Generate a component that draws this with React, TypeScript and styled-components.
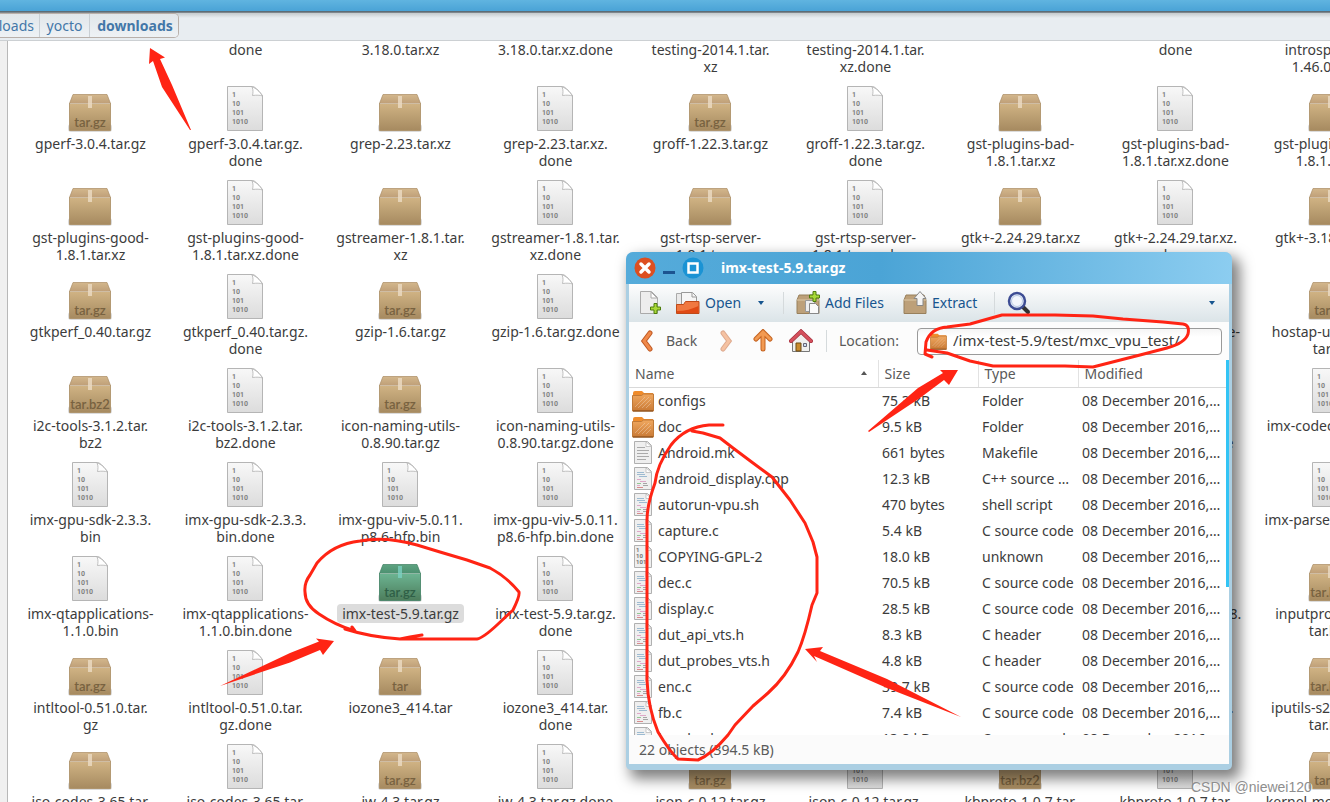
import React from "react";
import styled, { createGlobalStyle, css } from "styled-components";

const GlobalStyle = createGlobalStyle`
  * { box-sizing: border-box; }
  body {
    margin: 0;
    background: #fff;
    color: #3c3c3c;
    font-family: "Noto Sans", "Open Sans", sans-serif;
    font-size: 14px;
  }
  button, input { font: inherit; color: inherit; }
`;

const Desktop = styled.div`
  position: relative;
  display: flex;
  flex-direction: column;
  height: 100vh;
  overflow: hidden;
`;

const TitleStrip = styled.div`
  flex: none;
  height: 13px;
  background: linear-gradient(#60b4e0, #4aa3d6 11px, #4d5f69 11px, #8d9499 13px);
`;

const PathBar = styled.nav`
  flex: none;
  display: flex;
  height: 28px;
  padding-bottom: 2px;
  background: linear-gradient(#c4cacd, #e8edf1 5px);
  border-bottom: 1px solid #ccd0d3;
`;

const Crumbs = styled.div`
  display: flex;
  width: 179px;
  border: 1px solid #b9b0aa;
  border-left: 0;
  border-radius: 0 5px 5px 0;
  overflow: hidden;
`;

const Crumb = styled.a<{ $width: number; $current?: boolean }>`
  width: ${(p) => p.$width}px;
  display: flex;
  flex: none;
  align-items: center;
  justify-content: ${(p) => (p.$width === 40 ? "flex-end" : "center")};
  padding-right: ${(p) => (p.$width === 40 ? 5 : 0)}px;
  border-right: ${(p) => (p.$current ? 0 : "1px solid #c9cfd4")};
  color: #4377a8;
  font-weight: ${(p) => (p.$current ? 700 : 400)};
  text-decoration: none;
  background: linear-gradient(#e1e6ea, #eef2f5);
`;

const Browser = styled.div`
  flex: 1;
  display: flex;
  min-height: 0;
`;

const SideEdge = styled.div`
  flex: none;
  width: 8px;
  background: #f0f0f0;
  border-right: 1px solid #b8b8b8;
`;

const IconView = styled.main`
  flex: 1;
  min-width: 0;
  padding-left: 5px;
  overflow: hidden;
`;

const IconRow = styled.div<{ $short?: boolean }>`
  display: grid;
  grid-template-columns: repeat(9, 155px);
  height: ${(p) => (p.$short ? 43 : 94)}px;
`;

const FileCell = styled.div`
  display: flex;
  flex-direction: column;
  align-items: center;
  gap: 3px;
`;

const Label = styled.span<{ $selected?: boolean }>`
  line-height: 17px;
  text-align: center;
  white-space: nowrap;
  ${(p) =>
    p.$selected &&
    css`
      margin-top: -1px;
      padding: 1px 5px;
      border-radius: 4px;
      background: #dcdcdc;
    `}
`;

const Window = styled.section`
  position: absolute;
  left: 626px;
  top: 252px;
  width: 606px;
  display: flex;
  flex-direction: column;
  border-radius: 8px 8px 5px 5px;
  background: #abcfe3;
  padding: 0 3px 6px;
  box-shadow: 6px 7px 14px 2px rgba(0, 0, 0, 0.5);
`;

const TitleBar = styled.header`
  display: flex;
  align-items: center;
  height: 32px;
  margin: 0 -3px;
  padding-left: 8px;
  gap: 5px;
  border-radius: 7px 7px 0 0;
  background: linear-gradient(90deg, #55abda, #4ba4d6 42%, #8ccdf0);
  color: #fff;
`;

const WindowButton = styled.button`
  display: flex;
  padding: 0;
  border: 0;
  background: none;
`;

const WindowTitle = styled.h1`
  margin: 0 0 0 12px;
  padding-bottom: 2px;
  font-size: 14px;
  font-weight: 700;
`;

const ToolBar = styled.div`
  display: flex;
  align-items: center;
  height: 38px;
  padding-left: 10px;
  background: linear-gradient(#fdfdfd, #dbe4e8);
`;

const NavBar = styled(ToolBar)`
  background: #fcfcfc;
  padding: 0 7px 0 9px;
`;

const ToolButton = styled.button<{ $width: number; $dim?: boolean }>`
  display: flex;
  flex: none;
  align-items: center;
  gap: ${(p) => (p.$dim ? 12 : 5)}px;
  width: ${(p) => p.$width}px;
  padding: 0;
  border: 0;
  background: none;
  color: ${(p) => (p.$dim ? "#5a5a5a" : "#17558f")};
  white-space: nowrap;
`;

const ToolText = styled.span`
  padding-bottom: 2px;
`;

const Separator = styled.i`
  flex: none;
  width: 1px;
  height: 22px;
  margin-right: 12px;
  background: #d5dadc;
`;

const Spacer = styled.span`
  flex: 1;
`;

const LocationLabel = styled.label`
  width: 78px;
  flex: none;
  padding-bottom: 2px;
  color: #5a5a5a;
`;

const LocationBox = styled.div`
  display: flex;
  flex: 1;
  min-width: 0;
  align-items: center;
  gap: 6px;
  height: 27px;
  padding: 0 12px;
  border: 1px solid #9a9a9a;
  border-radius: 4px;
  background: linear-gradient(#f5f5f5, #fff 8px);
`;

const LocationInput = styled.input`
  flex: 1;
  min-width: 0;
  padding: 0 0 2px;
  border: 0;
  outline: 0;
  background: none;
  font-size: 15px;
`;

const ListPane = styled.div`
  position: relative;
  height: 375px;
  overflow: hidden;
  background: #fff;
`;

const ScrollThumb = styled.div`
  position: absolute;
  right: 0;
  top: 0;
  width: 3px;
  height: 227px;
  background: #33c4f5;
`;

const FileTable = styled.table`
  width: 100%;
  table-layout: fixed;
  border-collapse: collapse;
`;

const Column = styled.col<{ $width?: number }>`
  ${(p) => p.$width && `width: ${p.$width}px;`}
`;

const Heading = styled.th`
  height: 27px;
  padding: 0 6px;
  border-right: 1px solid #e2e2e2;
  border-bottom: 1px solid #d9d9d9;
  color: #5a5a5a;
  font-weight: 400;
  text-align: left;
  &:last-child { border-right: 0; }
`;

const HeadingRow = styled.span`
  display: flex;
  align-items: center;
  justify-content: space-between;
  padding-right: 4px;
`;

const Cell = styled.td`
  height: 26px;
  padding: 0 0 0 4px;
  overflow: hidden;
  white-space: nowrap;
`;

const NameCell = styled.span`
  display: flex;
  align-items: center;
  gap: 4px;
  height: 26px;
  margin-left: -1px;
`;

const StatusBar = styled.footer`
  height: 29px;
  padding-left: 10px;
  line-height: 29px;
  background: #fbfbfb;
  color: #5a5a5a;
`;

const Markup = styled.svg`
  position: absolute;
  left: 0;
  top: 0;
  pointer-events: none;
`;

const Watermark = styled.span`
  position: absolute;
  left: 1191px;
  bottom: 5px;
  font-family: "Liberation Sans", sans-serif;
  font-size: 14px;
  line-height: 20px;
  white-space: nowrap;
  color: #8e8e8e;
  text-shadow: 1px 1px 0 #fff;
`;

function BoxIcon({ tag, green }: { tag?: string; green?: boolean }) {
  const [edge, lid, lidLow, top, bottom, tape] = green
    ? ["#3f7f62", "#5da381", "#4c9070", "#6cb492", "#4d7d5c", "#7ad0c0"]
    : ["#a98c62", "#d3b78c", "#bf9f78", "#d0b384", "#a68a60", "#ecdcc4"];
  const id = green ? "g" : "b";
  return (
    <svg width="49" height="48" viewBox="0 0 49 48">
      <defs>
        <linearGradient id={"lid" + id} x2="0" y2="1">
          <stop stopColor={lid} />
          <stop offset="1" stopColor={lidLow} />
        </linearGradient>
        <linearGradient id={"box" + id} x2="0" y2="1">
          <stop stopColor={top} />
          <stop offset="1" stopColor={bottom} />
        </linearGradient>
      </defs>
      <rect x="2" y="40" width="44" height="8" rx="3" fill="#000" opacity=".14" />
      <path d="M7 10.500h34l3.500 9h-41z" fill={`url(#lid${id})`} stroke={edge} strokeOpacity=".7" />
      <path d="M3.500 19.500h41v27h-41z" fill={`url(#box${id})`} stroke={edge} strokeOpacity=".8" />
      <path d="M4 19.500h40" stroke="#fff" opacity=".4" />
      <path d="M22 12h4v12h-4z" fill={tape} opacity=".8" />
      {tag && (
        <text
          x="24"
          y="43"
          textAnchor="middle"
          fontFamily="Lato, sans-serif"
          fontWeight="600"
          fontSize="13"
          fill={green ? "#2f5f46" : "#786240"}
        >
          {tag}
        </text>
      )}
    </svg>
  );
}

function BinaryIcon() {
  return (
    <svg width="49" height="48" viewBox="0 0 49 48">
      <defs>
        <linearGradient id="paper" x2="0" y2="1">
          <stop stopColor="#f8f8f8" />
          <stop offset="1" stopColor="#dcdcdc" />
        </linearGradient>
      </defs>
      <path d="M6.500 2.500h25q3 0 10 9v35h-35z" fill="url(#paper)" stroke="#b5b5b5" />
      <path d="M31 3c1.500 3 1 6 .5 8.500 4-.5 7.500-.5 10 .5-3-4.500-6.500-8-10.500-9z" fill="#fff" stroke="#b0b0b0" strokeWidth=".8" />
      <g fontFamily="Roboto, sans-serif" fontWeight="700" fontSize="7" fill="#808080">
        <text x="11" y="13">1</text>
        <text x="11" y="22">10</text>
        <text x="11" y="31">101</text>
        <text x="11" y="40">1010</text>
      </g>
    </svg>
  );
}

function FolderIcon({ size }: { size: number }) {
  return (
    <svg width={size} height={size} viewBox="0 0 22 22">
      <defs>
        <linearGradient id="folder" x2="0" y2="1">
          <stop stopColor="#f0a860" />
          <stop offset="1" stopColor="#c97a35" />
        </linearGradient>
      </defs>
      <path d="M1 3q0-2 2-2h7l2 2h9v6H1z" fill="#ef8c2c" />
      <path d="M.500 5.500h9l2-1.500h10v17H.500z" fill="url(#folder)" stroke="#c07a38" />
      <path d="M3 17 13 7M6 18 17 7M10 18l9-9M14 18l5-5" stroke="#fff" opacity=".28" />
      <path d="M1 21h20" stroke="#7d4312" />
    </svg>
  );
}

type DocKind = "text" | "code" | "bin";

function DocIcon({ kind }: { kind: DocKind }) {
  return (
    <svg width="22" height="24" viewBox="0 0 22 24">
      <path d="M2.500.500h13l4 4v18h-17z" fill="#efefef" stroke="#b0b0b0" />
      <path d="M14 1v4.500h5.500z" fill="#fff" stroke="#bbb" strokeWidth=".8" />
      {kind === "text" && <path d="M5 6.500h8M5 9.500h12M5 12.500h11M5 15.500h12M5 18.500h9" stroke="#aaa" />}
      {kind === "code" && (
        <g strokeWidth="1" opacity=".85">
          <path d="M5 5.500h7M5 7.500h8M7 9.500h8" stroke="#8fb2cc" />
          <path d="M5 12.500h4M8 14.500h6M5 18.500h3" stroke="#dc9cc2" />
          <path d="M5 16.500h4" stroke="#85c085" />
          <path d="M11 16.500h4M11 18.500h5" stroke="#999" />
          <path d="M5 20.500h6" stroke="#d67a7a" />
        </g>
      )}
      {kind === "bin" && (
        <g fontFamily="Roboto, sans-serif" fontWeight="700" fontSize="6" fill="#777">
          <text x="4" y="7">1</text>
          <text x="4" y="13">10</text>
          <text x="4" y="19">101</text>
        </g>
      )}
    </svg>
  );
}

const Plus = ({ x, y }: { x: number; y: number }) => (
  <path
    transform={`translate(${x} ${y})`}
    d="M4 .500h3v3.500h3.500v3H7v3.500H4V7H.500V4H4z"
    fill="#a8d838"
    stroke="#4e7d0c"
  />
);

const NewIcon = () => (
  <svg width="24" height="26" viewBox="0 0 24 26">
    <path d="M1.500 1.500h11l6 6v16h-17z" fill="#ededed" stroke="#aaa" />
    <path d="M12 2v6h6z" fill="#fff" stroke="#aaa" />
    <Plus x={11} y={13} />
  </svg>
);

const OpenIcon = () => (
  <svg width="25" height="26" viewBox="0 0 25 26">
    <path d="M1.500 3.500h8v19h-8z" fill="#e9e9e9" stroke="#aaa" />
    <path d="M6.500 2.500h11l4 4v8h-15z" fill="#f6f6f6" stroke="#999" />
    <path d="M17 3v4h4" fill="none" stroke="#999" />
    <path d="M1.500 23.500v-9h7l2-3h13.500v12z" fill="#f07840" stroke="#c04a18" />
    <path d="M2 21c8 0 15-2 21.500-5v7H2z" fill="#e04a14" />
  </svg>
);

const SmallBox = () => (
  <>
    <path d="M3 5h18l2 5v13.500H1V10z" fill="#bda079" stroke="#98805c" />
    <path d="M1 10h22" stroke="#ddc9a8" />
  </>
);

const AddIcon = () => (
  <svg width="24" height="26" viewBox="0 0 24 26">
    <SmallBox />
    <path d="M9.500 10.500h9v11h-9z" fill="#ececec" stroke="#999" />
    <path d="M13.500 13.500h6l3 3v7h-9z" fill="#fafafa" stroke="#888" />
    <Plus x={13} y={1} />
  </svg>
);

const ExtractIcon = () => (
  <svg width="24" height="26" viewBox="0 0 24 26">
    <SmallBox />
    <path d="m17 1.500 6 7h-3v7h-6v-7h-3z" fill="#f4f4f4" stroke="#888" />
  </svg>
);

const SearchIcon = () => (
  <svg width="24" height="24" viewBox="0 0 24 24">
    <path d="m15 15 6 6" stroke="#333" strokeWidth="4" strokeLinecap="round" />
    <circle cx="10" cy="10" r="8" fill="#e4edf8" stroke="#3d4d94" strokeWidth="2.500" />
    <circle cx="10" cy="10" r="5.500" fill="#f2f6fc" stroke="#b8c8e4" />
  </svg>
);

const DropIcon = () => (
  <svg width="8" height="6" viewBox="0 0 8 6">
    <path d="M1 1h6L4 5z" fill="#17558f" />
  </svg>
);

const Chevron = ({ forward }: { forward?: boolean }) => (
  <svg width="16" height="24" viewBox="0 0 16 24" opacity={forward ? 0.5 : 1}>
    <g transform={forward ? "translate(17 0) scale(-1 1)" : undefined} fill="none" strokeLinecap="round">
      <path d="M12 4 6 12l6 8" stroke="#c05a24" strokeWidth="5" />
      <path d="M12 4 6 12l6 8" stroke="#f0894a" strokeWidth="3" />
    </g>
  </svg>
);

const UpIcon = () => (
  <svg width="20" height="24" viewBox="0 0 20 24" fill="none" strokeLinecap="round">
    <path d="M10 4v16M3 10l7-7 7 7" stroke="#c4621f" strokeWidth="5" />
    <path d="M10 4v16M3 10l7-7 7 7" stroke="#f29a52" strokeWidth="3" />
  </svg>
);

const HomeIcon = () => (
  <svg width="24" height="24" viewBox="0 0 24 24">
    <path d="M3.500 11 12 4l8.500 7v11.500h-17z" fill="#f0f0ee" stroke="#777" />
    <path d="M7 14h5v8H7z" fill="#c88a2c" stroke="#6d4a12" />
    <path d="M14.500 14.500h3v3h-3z" fill="#cfe0ee" stroke="#667" />
    <path d="m2 12 10-9.500L22 12" fill="none" stroke="#9c2c3a" strokeWidth="4" strokeLinecap="round" />
    <path d="m2 12 10-9.500L22 12" fill="none" stroke="#d4505c" strokeWidth="3" strokeLinecap="round" />
  </svg>
);

type Item = { kind: "none" | "bin" | "box" | "green"; tag?: string; lines: string[] } | null;

const bin = (...lines: string[]): Item => ({ kind: "bin", lines });
const box = (tag: string, ...lines: string[]): Item => ({ kind: "box", tag, lines });
const text = (...lines: string[]): Item => ({ kind: "none", lines });

const topRow: Item[] = [
  null,
  text("done"),
  text("3.18.0.tar.xz"),
  text("3.18.0.tar.xz.done"),
  text("testing-2014.1.tar.", "xz"),
  text("testing-2014.1.tar.", "xz.done"),
  null,
  text("done"),
  text("introspection-", "1.46.0.tar.xz"),
];

const rows: Item[][] = [
  [
    box("tar.gz", "gperf-3.0.4.tar.gz"),
    bin("gperf-3.0.4.tar.gz.", "done"),
    box("", "grep-2.23.tar.xz"),
    bin("grep-2.23.tar.xz.", "done"),
    box("tar.gz", "groff-1.22.3.tar.gz"),
    bin("groff-1.22.3.tar.gz.", "done"),
    box("", "gst-plugins-bad-", "1.8.1.tar.xz"),
    bin("gst-plugins-bad-", "1.8.1.tar.xz.done"),
    box("", "gst-plugins-base-", "1.8.1.tar.xz"),
  ],
  [
    box("", "gst-plugins-good-", "1.8.1.tar.xz"),
    bin("gst-plugins-good-", "1.8.1.tar.xz.done"),
    box("", "gstreamer-1.8.1.tar.", "xz"),
    bin("gstreamer-1.8.1.tar.", "xz.done"),
    box("", "gst-rtsp-server-", "1.8.1.tar.xz"),
    bin("gst-rtsp-server-", "1.8.1.tar.xz.done"),
    box("", "gtk+-2.24.29.tar.xz"),
    bin("gtk+-2.24.29.tar.xz.", "done"),
    box("", "gtk+-3.18.8.tar.xz"),
  ],
  [
    box("tar.gz", "gtkperf_0.40.tar.gz"),
    bin("gtkperf_0.40.tar.gz.", "done"),
    box("tar.gz", "gzip-1.6.tar.gz"),
    bin("gzip-1.6.tar.gz.done"),
    null,
    null,
    null,
    bin("hicolor-icon-theme-", "0.15.tar.xz.done"),
    box("tar.gz", "hostap-utils-0.4.7.", "tar.gz"),
  ],
  [
    box("tar.bz2", "i2c-tools-3.1.2.tar.", "bz2"),
    bin("i2c-tools-3.1.2.tar.", "bz2.done"),
    box("tar.gz", "icon-naming-utils-", "0.8.90.tar.gz"),
    bin("icon-naming-utils-", "0.8.90.tar.gz.done"),
    null,
    null,
    null,
    bin("image-utils-1.0.2.", "55.12.src.tar.done"),
    bin("imx-codec-4.1.4.bin"),
  ],
  [
    bin("imx-gpu-sdk-2.3.3.", "bin"),
    bin("imx-gpu-sdk-2.3.3.", "bin.done"),
    bin("imx-gpu-viv-5.0.11.", "p8.6-hfp.bin"),
    bin("imx-gpu-viv-5.0.11.", "p8.6-hfp.bin.done"),
    null,
    null,
    null,
    bin("imx-lib-5.9.tar.gz."),
    bin("imx-parser-4.1.4.bin"),
  ],
  [
    bin("imx-qtapplications-", "1.1.0.bin"),
    bin("imx-qtapplications-", "1.1.0.bin.done"),
    { kind: "green", tag: "tar.gz", lines: ["imx-test-5.9.tar.gz"] },
    bin("imx-test-5.9.tar.gz.", "done"),
    null,
    null,
    null,
    bin("initramfs-tools-0.18."),
    box("tar.bz2", "inputproto-2.3.1.", "tar.bz2"),
  ],
  [
    box("tar.gz", "intltool-0.51.0.tar.", "gz"),
    bin("intltool-0.51.0.tar.", "gz.done"),
    box("tar", "iozone3_414.tar"),
    bin("iozone3_414.tar.", "done"),
    null,
    null,
    null,
    bin("iproute2-4.4.0.tar."),
    box("tar.bz2", "iputils-s20151218.", "tar.bz2"),
  ],
  [
    box("", "iso-codes-3.65.tar."),
    bin("iso-codes-3.65.tar."),
    box("tar.gz", "iw-4.3.tar.gz"),
    bin("iw-4.3.tar.gz.done"),
    box("tar.gz", "json-c-0.12.tar.gz"),
    bin("json-c-0.12.tar.gz."),
    box("tar.bz2", "kbproto-1.0.7.tar."),
    bin("kbproto-1.0.7.tar."),
    box("tar.gz", "kernel-module-imx-"),
  ],
];

type Entry = [string, string, string, "folder" | DocKind];

const entries: Entry[] = [
  ["configs", "75.3 kB", "Folder", "folder"],
  ["doc", "9.5 kB", "Folder", "folder"],
  ["Android.mk", "661 bytes", "Makefile", "text"],
  ["android_display.cpp", "12.3 kB", "C++ source …", "code"],
  ["autorun-vpu.sh", "470 bytes", "shell script", "code"],
  ["capture.c", "5.4 kB", "C source code", "code"],
  ["COPYING-GPL-2", "18.0 kB", "unknown", "bin"],
  ["dec.c", "70.5 kB", "C source code", "code"],
  ["display.c", "28.5 kB", "C source code", "code"],
  ["dut_api_vts.h", "8.3 kB", "C header", "code"],
  ["dut_probes_vts.h", "4.8 kB", "C header", "code"],
  ["enc.c", "39.7 kB", "C source code", "code"],
  ["fb.c", "7.4 kB", "C source code", "code"],
  ["loopback.c", "13.8 kB", "C source code", "code"],
];

function File({ item }: { item: Item }) {
  if (!item) return <FileCell />;
  return (
    <FileCell>
      {item.kind === "bin" && <BinaryIcon />}
      {(item.kind === "box" || item.kind === "green") && (
        <BoxIcon tag={item.tag} green={item.kind === "green"} />
      )}
      <Label $selected={item.kind === "green"}>
        {item.lines.map((line, i) => (
          <React.Fragment key={i}>
            {i > 0 && <br />}
            {line}
          </React.Fragment>
        ))}
      </Label>
    </FileCell>
  );
}

function Annotations() {
  return (
    <Markup width="1330" height="802" viewBox="0 0 1330 802" aria-hidden="true">
      <g fill="#ff2414">
        <path d="M150 48 165 57.500 160 59 172 85 191 130H190L162 87 153 61 149 64z" />
        <path d="M334 641 316 638.500 319 641.500 290 653 220 686V684.500 686L290 662.500 320 650 323 655z" />
        <path d="M958 370 940 370 943 373 918 388 868 431 869 432 920 398 944 380 949 385z" />
        <path d="M805 649 823 647 820 651 887 679 961 717 887 688 814 656 817 662z" />
      </g>
      <g fill="none" stroke="#ff2414" strokeWidth="3" strokeLinejoin="round" strokeLinecap="round">
        <path d="M352 627 355 631Q335 625 319 614 305 605 305 592 304 583 310 575L317 563Q333 544 360 541 385 536 417 545L440 552 467 560 490 568Q507 577 519 592 520 596 513 610L497 625Q483 638 477 639H400Q370 637 345 629M400 639 410 637 422 635" />
        <path d="M723 425H709Q685 427 671 445 657 465 655 483 647 505 647 520V680Q648 708 658 732 670 752 678 759L698 760Q712 754 728 735L735 725 753 706 768 693Q786 677 798 652 805 636 812 605L817 593V557L813 542 805 523 790 500 772 477 753 463 733 448 720 438 703 433 692 431" />
        <path d="M932 357 925 354 926 342Q931 328 947 327L970 324 1002 315H1055L1093 316 1123 319 1163 322 1183 324Q1190 325 1188 334 1185 343 1167 348L1140 355 1093 367 1065 366H993L970 361 947 353 927 350" />
      </g>
    </Markup>
  );
}

export default function App() {
  return (
    <>
      <GlobalStyle />
      <Desktop>
        <TitleStrip />
        <PathBar aria-label="Path">
          <Crumbs>
            <Crumb href="#downloads-root" $width={40}>Downloads</Crumb>
            <Crumb href="#yocto" $width={50}>yocto</Crumb>
            <Crumb href="#downloads" $width={90} $current>downloads</Crumb>
          </Crumbs>
        </PathBar>
        <Browser>
          <SideEdge />
          <IconView>
            <IconRow $short>
              {topRow.map((item, i) => <File key={i} item={item} />)}
            </IconRow>
            {rows.map((row, r) => (
              <IconRow key={r}>
                {row.map((item, i) => <File key={i} item={item} />)}
              </IconRow>
            ))}
          </IconView>
        </Browser>

        <Window>
          <TitleBar>
            <WindowButton aria-label="Close">
              <svg width="22" height="22" viewBox="0 0 22 22">
                <circle cx="11" cy="11" r="10.500" fill="#dd4f20" />
                <path d="m7 7 8 8m0-8-8 8" stroke="#fff" strokeWidth="3.500" strokeLinecap="round" />
              </svg>
            </WindowButton>
            <WindowButton aria-label="Minimize">
              <svg width="16" height="22" viewBox="0 0 16 22">
                <path d="M2 14h12v3H2z" fill="#1c5490" />
              </svg>
            </WindowButton>
            <WindowButton aria-label="Maximize">
              <svg width="22" height="22" viewBox="0 0 22 22">
                <circle cx="11" cy="11" r="10.500" fill="#1b93d4" />
                <path d="M6.500 6.500h9v9h-9z" fill="none" stroke="#fff" strokeWidth="2.500" />
              </svg>
            </WindowButton>
            <WindowTitle>imx-test-5.9.tar.gz</WindowTitle>
          </TitleBar>

          <ToolBar>
            <ToolButton $width={36} aria-label="New"><NewIcon /></ToolButton>
            <ToolButton $width={82}><OpenIcon /><ToolText>Open</ToolText></ToolButton>
            <ToolButton $width={26} aria-label="Open recent"><DropIcon /></ToolButton>
            <Separator />
            <ToolButton $width={107}><AddIcon /><ToolText>Add Files</ToolText></ToolButton>
            <ToolButton $width={91}><ExtractIcon /><ToolText>Extract</ToolText></ToolButton>
            <Separator />
            <ToolButton $width={24} aria-label="Find"><SearchIcon /></ToolButton>
            <Spacer />
            <ToolButton $width={21} aria-label="More"><DropIcon /></ToolButton>
          </ToolBar>

          <NavBar>
            <ToolButton $width={80} $dim><Chevron /><ToolText>Back</ToolText></ToolButton>
            <ToolButton $width={35} aria-label="Forward"><Chevron forward /></ToolButton>
            <ToolButton $width={36} aria-label="Up"><UpIcon /></ToolButton>
            <ToolButton $width={37} aria-label="Home"><HomeIcon /></ToolButton>
            <Separator />
            <LocationLabel htmlFor="location">Location:</LocationLabel>
            <LocationBox>
              <FolderIcon size={17} />
              <LocationInput id="location" defaultValue="/imx-test-5.9/test/mxc_vpu_test/" />
            </LocationBox>
          </NavBar>

          <ListPane>
            <FileTable>
              <colgroup>
                <Column $width={249} />
                <Column $width={100} />
                <Column $width={100} />
                <Column />
              </colgroup>
              <thead>
                <tr>
                  <Heading>
                    <HeadingRow>
                      Name
                      <svg width="8" height="6" viewBox="0 0 8 6">
                        <path d="M1 5h6L4 1z" fill="#555" />
                      </svg>
                    </HeadingRow>
                  </Heading>
                  <Heading>Size</Heading>
                  <Heading>Type</Heading>
                  <Heading>Modified</Heading>
                </tr>
              </thead>
              <tbody>
                {entries.map(([name, size, type, kind]) => (
                  <tr key={name}>
                    <Cell>
                      <NameCell>
                        {kind === "folder" ? <FolderIcon size={22} /> : <DocIcon kind={kind} />}
                        {name}
                      </NameCell>
                    </Cell>
                    <Cell>{size}</Cell>
                    <Cell>{type}</Cell>
                    <Cell>08 December 2016,…</Cell>
                  </tr>
                ))}
              </tbody>
            </FileTable>
            <ScrollThumb />
          </ListPane>
          <StatusBar>22 objects (394.5 kB)</StatusBar>
        </Window>

        <Annotations />
        <Watermark>CSDN @niewei120</Watermark>
      </Desktop>
    </>
  );
}
